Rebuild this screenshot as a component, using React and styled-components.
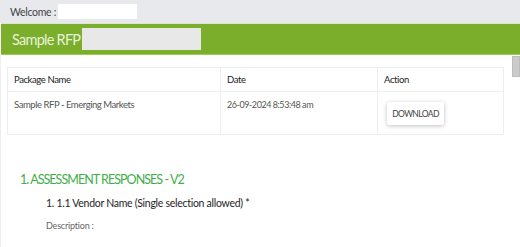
import styled, { createGlobalStyle } from "styled-components";

const GlobalStyle = createGlobalStyle`
  html, body {
    margin: 0;
    padding: 0;
    background: #ffffff;
    font-family: "Lato", "Open Sans", sans-serif;
    overflow: hidden;
  }
`;

const rows = [
  { name: "Sample RFP - Emerging Markets", date: "26-09-2024 8:53:48 am" },
];

export default function App() {
  return (
    <>
      <GlobalStyle />
      <Page>
        <TopBar>
          <span className="label">Welcome :</span>
          <FakeInput $width={79} $height={15} $bg="#ffffff" />
        </TopBar>
        <TitleBar>
          <span className="title">Sample RFP</span>
          <FakeInput $width={119} $height={22} $bg="#e8e8e8" />
        </TitleBar>
        <Content>
          <ScrollThumb />
          <Table>
            <thead>
              <tr>
                <Th $width={213}>Package Name</Th>
                <Th $width={157}>Date</Th>
                <Th>Action</Th>
              </tr>
            </thead>
            <tbody>
              {rows.map((r) => (
                <tr key={r.name}>
                  <Td>{r.name}</Td>
                  <Td $date>{r.date}</Td>
                  <Td>
                    <DownloadButton>DOWNLOAD</DownloadButton>
                  </Td>
                </tr>
              ))}
            </tbody>
          </Table>
          <Section>
            <SectionTitle>1. ASSESSMENT RESPONSES - V2</SectionTitle>
            <Question>
              <span className="q">1. 1.1 Vendor Name (Single selection allowed) *</span>
              <span className="desc">Description :</span>
            </Question>
          </Section>
        </Content>
      </Page>
    </>
  );
}

const Page = styled.div`
  width: 520px;
  height: 247px;
  display: flex;
  flex-direction: column;
  overflow: hidden;
`;

const TopBar = styled.div`
  height: 23px;
  background: #e8e9ed;
  display: flex;
  align-items: center;
  padding-left: 10px;
  gap: 2px;
  box-sizing: border-box;

  .label{
    font-size: 10.5px;
    letter-spacing: -0.3px;
    color: #444444;
  }
`;

const FakeInput = styled.div`
  width: ${(p) => p.$width}px;
  height: ${(p) => p.$height}px;
  background: ${(p) => p.$bg};
`;

const TitleBar = styled.div`
  height: 32px;
  background: #7aae2b;
  border-top: 1px solid #dfe6d4;
  border-bottom: 1px solid #9bcc4d;
  box-sizing: border-box;
  margin-left: 1px;
  display: flex;
  align-items: center;
  padding-left: 11px;
  gap: 2px;

  .title{
    font-size: 14.5px;
    letter-spacing: -0.75px;
    color: #e8f1da;
  }
`;

const Content = styled.div`
  position: relative;
  flex: 1;
  overflow: hidden;
  border-left: 1px solid #eeeeee;
  padding: 12px 0 0 6px;
`;

const ScrollThumb = styled.div`
  position: absolute;
  top: 1px;
  right: 0;
  width: 8px;
  height: 21px;
  box-sizing: border-box;
  background: #cbcbcb;
  border: 1px solid #bdbdbd;
`;

const Table = styled.table`
  width: 497px;
  border-collapse: collapse;
  border: 1px solid #eeeeee;
`;

const Th = styled.th`
  width: ${(p) => (p.$width ? `${p.$width}px` : "auto")};
  height: 24px;
  text-align: left;
  font-size: 9.5px;
  font-weight: 400;
  letter-spacing: -0.4px;
  color: #222222;
  padding: 0 6px;
  border: 1px solid #eeeeee;
  box-sizing: border-box;
`;

const Td = styled.td`
  height: 43px;
  vertical-align: top;
  font-size: ${(p) => (p.$date ? "9px" : "9.5px")};
  letter-spacing: -0.45px;
  color: #555555;
  padding: 7px 6px 0;
  border: 1px solid #eeeeee;
  box-sizing: border-box;
`;

const DownloadButton = styled.button`
  width: 57px;
  height: 23px;
  margin: 3px 0 0 3px;
  padding: 0;
  background: #ffffff;
  border: none;
  border-radius: 2px;
  box-shadow: 0 1px 4px rgba(0, 0, 0, 0.25);
  font-family: "Lato", sans-serif;
  font-size: 8.5px;
  letter-spacing: -0.6px;
  color: #444444;
`;

const Section = styled.div`
  padding: 37px 0 0 13px;
`;

const SectionTitle = styled.div`
  font-size: 12.5px;
  letter-spacing: -0.95px;
  color: #3fae49;
`;

const Question = styled.div`
  display: flex;
  flex-direction: column;
  padding: 10px 0 0 26px;
  gap: 11px;

  .q{
    font-size: 10.5px;
    letter-spacing: -0.28px;
    color: #1e1e1e;
  }
  .desc{
    font-size: 9px;
    letter-spacing: -0.2px;
    color: #666666;
  }
`;
